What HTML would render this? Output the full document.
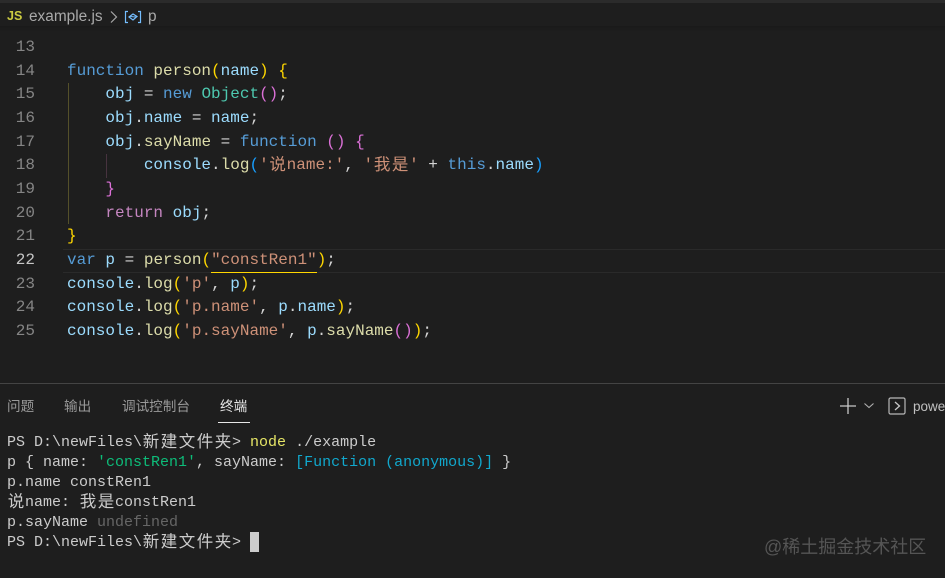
<!DOCTYPE html>
<html><head><meta charset="utf-8">
<style>
html,body{margin:0;padding:0;background:#1e1e1e;}
#r{position:relative;width:945px;height:578px;overflow:hidden;background:#1e1e1e;font-family:"Liberation Mono","Noto Sans CJK SC",monospace;}
.l{position:absolute;white-space:pre;font-size:16px;line-height:24px;height:24px;left:67px;color:#d4d4d4;}
.n{position:absolute;left:15px;width:20px;text-align:right;font-size:16px;line-height:24px;color:#858585;}
.t{position:absolute;left:7px;white-space:pre;font-size:15px;line-height:20px;height:20px;color:#cccccc;}
.c{display:inline-block;width:18px;height:20px;text-align:center;vertical-align:top;font-family:"Noto Sans CJK SC",sans-serif;font-size:16.5px;line-height:15px;}
.e{display:inline-block;width:18px;height:24px;text-align:center;vertical-align:top;font-family:"Noto Sans CJK SC",sans-serif;font-size:16.5px;line-height:20px;}
.k{color:#569cd6}.f{color:#dcdcaa}.v{color:#9cdcfe}.y{color:#ffd700}.m{color:#da70d6}.b{color:#179fff}.g{color:#4ec9b0}.s{color:#ce9178}.q{color:#c586c0}.u{color:#4fc1ff}
.p{position:absolute;top:399px;font-family:"Liberation Sans","Noto Sans CJK SC",sans-serif;font-size:13.6px;line-height:16px;color:#9a9a9a;white-space:pre;}
.a{position:absolute;}
</style></head><body><div id="r">
<div class="a" style="left:0;top:0;width:945px;height:3px;background:#2b2b2b"></div>
<div class="a" style="left:0;top:26px;width:945px;height:6px;background:linear-gradient(#1a1a1a,#1e1e1e)"></div>
<div class="a" style="left:7px;top:9px;font:bold 12.5px/14px 'Liberation Sans',sans-serif;color:#cbcb41">JS</div>
<div class="a" style="left:29px;top:8px;font:15.4px/18px 'Liberation Sans',sans-serif;color:#a9a9a9;white-space:pre">example.js</div>
<svg class="a" style="left:108px;top:9px" width="12" height="16" viewBox="0 0 12 16"><path d="M3 2.500l5.500 5.500-5.500 5.500" fill="none" stroke="#a9a9a9" stroke-width="1.200"/></svg>
<svg class="a" style="left:124px;top:10px" width="18" height="14" viewBox="0 0 18 14"><path d="M4 1.500H1.500v11H4M14 1.500h2.500v11H14" fill="none" stroke="#75beff" stroke-width="1.200"/><path d="M5 7l4-3 4 2.500-4 3.500z" fill="none" stroke="#75beff" stroke-width="1.200"/><path d="M6 6.500l6 .5" stroke="#75beff" stroke-width="1"/></svg>
<div class="a" style="left:148px;top:8px;font:15.4px/18px 'Liberation Sans',sans-serif;color:#a9a9a9">p</div>

<div class="a" style="left:68px;top:83px;width:1px;height:141px;background:#54502a"></div>
<div class="a" style="left:106px;top:154px;width:1px;height:24px;background:#47333f"></div>
<div class="a" style="left:63px;top:249px;width:882px;height:22px;border-top:1px solid #2a2a2a;border-bottom:1px solid #2a2a2a"></div>
<div class="a" style="left:211px;top:272px;width:106px;height:1px;background:#ffd700"></div>

<div class="n" style="top:35px">13</div>
<div class="n" style="top:59px">14</div>
<div class="n" style="top:82px">15</div>
<div class="n" style="top:106px">16</div>
<div class="n" style="top:130px">17</div>
<div class="n" style="top:153px">18</div>
<div class="n" style="top:177px">19</div>
<div class="n" style="top:201px">20</div>
<div class="n" style="top:224px">21</div>
<div class="n" style="top:248px;color:#c6c6c6">22</div>
<div class="n" style="top:272px">23</div>
<div class="n" style="top:295px">24</div>
<div class="n" style="top:319px">25</div>

<div class="l" style="top:59px"><span class="k">function</span> <span class="f">person</span><span class="y">(</span><span class="v">name</span><span class="y">)</span> <span class="y">{</span></div>
<div class="l" style="top:82px">    <span class="v">obj</span> = <span class="k">new</span> <span class="g">Object</span><span class="m">()</span>;</div>
<div class="l" style="top:106px">    <span class="v">obj</span>.<span class="v">name</span> = <span class="v">name</span>;</div>
<div class="l" style="top:130px">    <span class="v">obj</span>.<span class="f">sayName</span> = <span class="k">function</span> <span class="m">()</span> <span class="m">{</span></div>
<div class="l" style="top:153px">        <span class="v">console</span>.<span class="f">log</span><span class="b">(</span><span class="s">'<span class="e">说</span>name:'</span>, <span class="s">'<span class="e">我</span><span class="e">是</span>'</span> + <span class="k">this</span>.<span class="v">name</span><span class="b">)</span></div>
<div class="l" style="top:177px">    <span class="m">}</span></div>
<div class="l" style="top:201px">    <span class="q">return</span> <span class="v">obj</span>;</div>
<div class="l" style="top:224px"><span class="y">}</span></div>
<div class="l" style="top:248px"><span class="k">var</span> <span class="v">p</span> = <span class="f">person</span><span class="y">(</span><span class="s">"constRen1"</span><span class="y">)</span>;</div>
<div class="l" style="top:272px"><span class="v">console</span>.<span class="f">log</span><span class="y">(</span><span class="s">'p'</span>, <span class="v">p</span><span class="y">)</span>;</div>
<div class="l" style="top:295px"><span class="v">console</span>.<span class="f">log</span><span class="y">(</span><span class="s">'p.name'</span>, <span class="v">p</span>.<span class="v">name</span><span class="y">)</span>;</div>
<div class="l" style="top:319px"><span class="v">console</span>.<span class="f">log</span><span class="y">(</span><span class="s">'p.sayName'</span>, <span class="v">p</span>.<span class="f">sayName</span><span class="m">()</span><span class="y">)</span>;</div>

<div class="a" style="left:0;top:383px;width:945px;height:1px;background:#444444"></div>
<div class="p" style="left:7px">问题</div>
<div class="p" style="left:64px">输出</div>
<div class="p" style="left:122px">调试控制台</div>
<div class="p" style="left:220px;color:#e7e7e7">终端</div>
<div class="a" style="left:218px;top:422px;width:32px;height:1px;background:#e7e7e7"></div>
<svg class="a" style="left:838px;top:396px" width="20" height="20" viewBox="0 0 20 20"><path d="M10 2v16M2 10h16" stroke="#c8c8c8" stroke-width="1.300" fill="none"/></svg>
<svg class="a" style="left:862px;top:400px" width="14" height="12" viewBox="0 0 14 12"><path d="M2.500 3.500l4.500 4 4.500-4" stroke="#b0b0b0" stroke-width="1.100" fill="none"/></svg>
<svg class="a" style="left:888px;top:397px" width="19" height="19" viewBox="0 0 19 19"><rect x="1" y="1" width="16" height="16" rx="1.500" fill="none" stroke="#b8b8b8" stroke-width="1.200"/><path d="M7 5l4.500 4-4.500 4" fill="none" stroke="#c8c8c8" stroke-width="1.300"/></svg>
<div class="a" style="left:913px;top:399px;font:13.500px/16px 'Liberation Sans',sans-serif;color:#c0c0c0;white-space:pre">powershell</div>

<div class="t" style="top:433px">PS D:\newFiles\<span class="c">新</span><span class="c">建</span><span class="c">文</span><span class="c">件</span><span class="c">夹</span>&gt; <span style="color:#e5e566">node</span> ./example</div>
<div class="t" style="top:453px">p { name: <span style="color:#0dbc79">'constRen1'</span>, sayName: <span style="color:#11a8cd">[Function (anonymous)]</span> }</div>
<div class="t" style="top:473px">p.name constRen1</div>
<div class="t" style="top:493px"><span class="c">说</span>name: <span class="c">我</span><span class="c">是</span>constRen1</div>
<div class="t" style="top:513px">p.sayName <span style="color:#666666">undefined</span></div>
<div class="t" style="top:533px">PS D:\newFiles\<span class="c">新</span><span class="c">建</span><span class="c">文</span><span class="c">件</span><span class="c">夹</span>&gt;</div>
<div class="a" style="left:250px;top:532px;width:9px;height:20px;background:#cccccc"></div>
<div class="a" style="left:764px;top:537px;font:18px/20px 'Liberation Sans','Noto Sans CJK SC',sans-serif;color:#555555;white-space:pre">@稀土掘金技术社区</div>
</div></body></html>
